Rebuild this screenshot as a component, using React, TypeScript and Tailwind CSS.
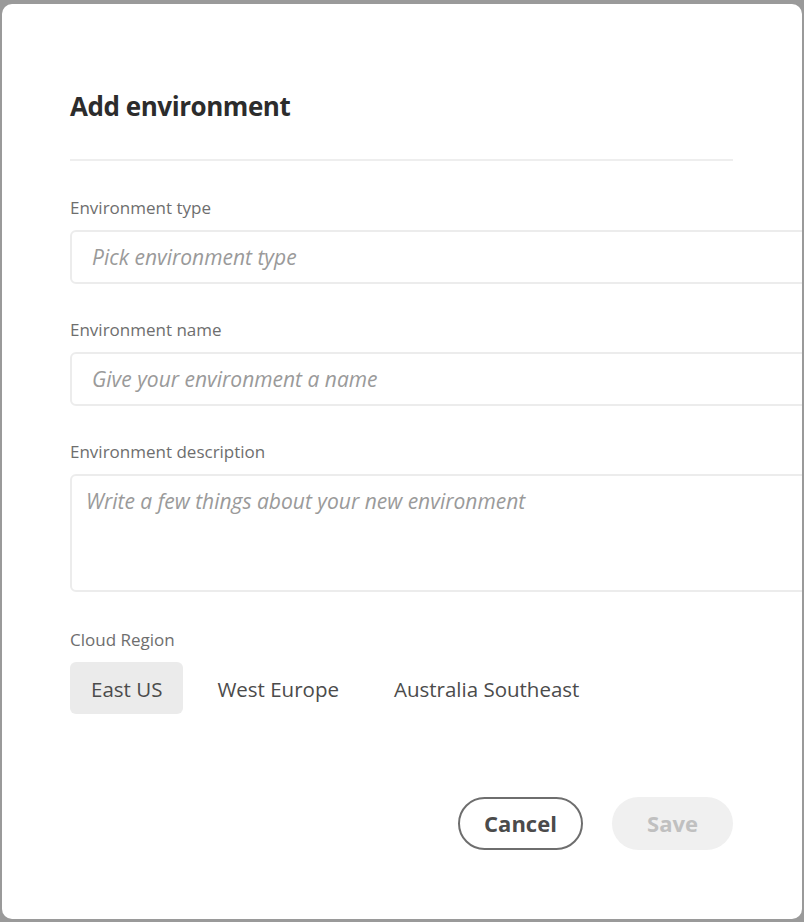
import React from 'react'

const regions = ['East US', 'West Europe', 'Australia Southeast']

function Field({ label, placeholder, tall }: { label: string; placeholder: string; tall?: boolean }) {
  return (
    <div className="flex flex-col">
      <div className="text-[17px] leading-[20px] text-[#6e6e6e]">{label}</div>
      {tall ? (
        <div className="mt-[12px] h-[118px] w-[760px] rounded-[6px] border-2 border-[#ececec] px-[14px] pt-[12px] text-[21px] italic leading-[26px] text-[#9a9a9a]">
          {placeholder}
        </div>
      ) : (
        <div className="mt-[12px] flex h-[54px] w-[760px] items-center rounded-[6px] border-2 border-[#ececec] px-[20px] pt-[2px] text-[21px] italic text-[#9a9a9a]">
          {placeholder}
        </div>
      )}
    </div>
  )
}

export default function App() {
  const [active, setActive] = React.useState('East US')

  return (
    <div className="h-[922px] w-[804px] overflow-hidden bg-[#9a9a9a] px-[2px] pt-[4px]" style={{ fontFamily: '"Open Sans", sans-serif' }}>
      <div className="relative flex h-[915px] flex-col overflow-hidden rounded-[10px] bg-white pl-[68px] pr-[68px]">
        <h2 className="mt-[86px] text-[26px] font-bold leading-[32px] tracking-[-0.45px] text-[#2c2c2c]">Add environment</h2>
        <div className="mt-[37px] h-[2px] w-[663px] bg-[#eeeeee]" />

        <div className="mt-[37px] flex flex-col gap-[36px]">
          <Field label="Environment type" placeholder="Pick environment type" />
          <Field label="Environment name" placeholder="Give your environment a name" />
          <Field label="Environment description" placeholder="Write a few things about your new environment" tall />
        </div>

        <div className="mt-[38px] text-[17px] leading-[20px] text-[#6e6e6e]">Cloud Region</div>
        <div className="mt-[12px] flex gap-[13px]">
          {regions.map((r) => (
            <button
              key={r}
              onClick={() => setActive(r)}
              className={`h-[52px] rounded-[6px] px-[21px] pt-[3px] text-[20.5px] text-[#4b4b4b] ${active === r ? 'bg-[#ebebeb]' : 'bg-transparent'}`}
            >
              {r}
            </button>
          ))}
        </div>

        <div className="mt-[83px] flex w-[663px] justify-end gap-[29px]">
          <button className="h-[53px] w-[125px] rounded-full border-2 border-[#6e6e6e] text-[22px] font-bold text-[#4b4b4b]">
            Cancel
          </button>
          <button className="h-[53px] w-[121px] rounded-full bg-[#f0f0f0] text-[22px] font-bold text-[#c0c0c0]">
            Save
          </button>
        </div>
      </div>
    </div>
  )
}
